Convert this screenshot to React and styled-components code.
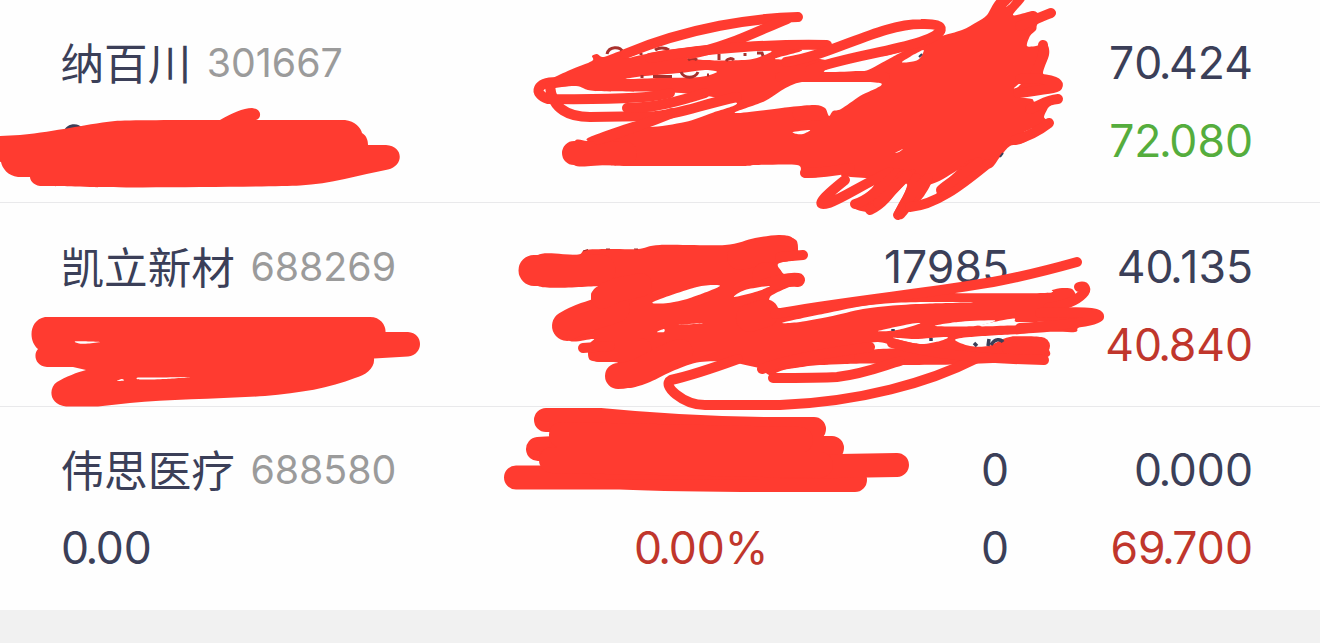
import React from 'react';
import styled, { createGlobalStyle } from 'styled-components';

const GlobalStyle = createGlobalStyle`
  body { margin: 0; background: #f1f1f1; }
`;

const colors = { ink: '#3b3f58', green: '#55ad3d', red: '#c0362c', marker: '#ff3b30' };

const Page = styled.main`
  position: relative;
  width: 1320px;
  height: 643px;
  overflow: hidden;
  background: #f1f1f1;
  font-family: Inter, 'Noto Sans CJK SC', sans-serif;
  font-size: 44.5px;
  color: ${colors.ink};
`;

const Row = styled.section`
  box-sizing: border-box;
  height: ${(p) => p.$height}px;
  padding: ${(p) => p.$top}px 67px 0 61px;
  background: #fefefe;
  border-bottom: ${(p) => (p.$last ? '0' : '1px solid #e9e9eb')};
`;

const Line = styled.div`
  display: grid;
  grid-template-columns: 400px 307.5px 240.5px 1fr;
  height: 78px;
  line-height: 78px;
  white-space: nowrap;
`;

const Cell = styled.div`
  text-align: ${(p) => (p.$left ? 'left' : 'right')};
  color: ${(p) => colors[p.$tone || 'ink']};
`;

const Tight = styled.span`
  letter-spacing: -2.5px;
`;

const Holding = styled.div`
  display: flex;
  gap: 15.5px;
`;

const Name = styled.span`
  margin-left: -0.5px;
  line-height: 74px;
  font-family: 'Noto Sans CJK SC', sans-serif;
  font-size: 43.6px;
`;

const Code = styled.span`
  font-size: 39.3px;
  color: #9b9b9b;
`;

const Ink = styled.svg`
  position: absolute;
  inset: 0;
  pointer-events: none;
`;

// A decimal number; the point and the digit before it are set tightly.
function Decimal({ value }) {
  const at = value.indexOf('.');
  return (
    <>
      {value.slice(0, at - 1)}
      <Tight>{value.slice(at - 1, at + 1)}</Tight>
      {value.slice(at + 1)}
    </>
  );
}

// Closed smooth curve through a list of "x,y" points.
function smooth(text) {
  const p = text.trim().split(/\s+/).map((s) => s.split(',').map(Number));
  const n = p.length;
  let d = `M${p[0][0]},${p[0][1]}`;
  for (let i = 0; i < n; i++) {
    const a = p[(i + n - 1) % n], b = p[i], c = p[(i + 1) % n], e = p[(i + 2) % n];
    const k = 7;
    d += `C${b[0] + (c[0] - a[0]) / k},${b[1] + (c[1] - a[1]) / k} ${c[0] - (e[0] - b[0]) / k},${c[1] - (e[1] - b[1]) / k} ${c[0]},${c[1]}`;
  }
  return d + 'Z';
}

const masses = [
  '552,79 570,70 592,61 592,56 597,54 604,57 625,50 660,50 700,46 760,46 802,50 775,59 820,59 860,67 895,50 938,37 962,30 977,22 987,15 999,-2 1025,-2 1013,15 1032,11 1037,12.5 1042,18 1037,25 1036,30 1030,36 1027,46 1036,46 1042,44 1048,46 1049,55 1043,73 1050,78 1052,88 1040,94 1020,97 1032,99 1035,102 1048,100 1052,104 1048,108 1044,117 1047,121 1043,130 1023,143 1010,146 1000,157 991,168 978,166 962,168 937,182 912,188 895,172 872,178 843,176 839,174 807,178 801,173 797,165 755,165 740,166 630,166 605,165 574,165 575,141 587,141 590,137 637,121 650,127 685,122 712,113 737,103 700,95 660,92 595,91 576,86 548,88',
  '538,255 577,255 585,250 608,249 638,249 660,245 725,245 755,238 780,235 796,240 798,250 803,258 795,260 778,264 784,274 798,278 795,284 770,297 779,308 840,302 920,290 950,293 1045,293 1052,290 1062,288 1072,289 1076,298 1065,308 1085,309 1095,315 1090,321 1078,328 1075,332 1047,332 1003,336 1040,337 1046,345 1045,358 970,364 890,365 820,365 775,370 730,362 700,362 675,370 650,382 630,388 614,385 606,376 618,363 600,362 590,360 588,353 590,348 592,343 593,339 570,341 560,325 575,308 590,303 592,292 605,286 538,286',
  '854,207 870,212 882,206 903,186 915,170 885,172 872,188',
  '894,214 902,219 912,208 924,196 932,178 912,176 905,192',
  '938,190 945,195 985,168 970,160',
];

// Heavy marker passes: [width, path].
const heavy = [
  [24, 'M574,153L625,153.5'],
  [15, 'M800,114L819,113'],
  [31, 'M534,270.5L600,270'],
  [26, 'M740,257C755,254 770,248 785,248.5'],
  [28, 'M766,276L769,278'],
  [14, 'M765,286C780,281 790,279 798,280'],
  [30, 'M567,326C580,318 595,314 615,308'],
  [24, 'M603,297C615,288 625,289 640,285'],
  [28, 'M765,313L750,318'],
  [24, 'M600,350L640,350'],
  [26, 'M618,376C640,376 655,360 680,352'],
  [18, 'M1010,346L1041,346'],
  [24, 'M546,420L600,420C650,425 720,430 814,429'],
  [24, 'M538,449C600,444 780,448 832,448'],
  [24, 'M516,477.5L620,477.5C700,481 780,480 855,480'],
  [24, 'M600,468L780,467L897,465'],
  [26, 'M562,435L800,440M552,460L820,465'],
];

const gaps = [
  '628,58 640,53 660,44 695,34 731,30 715,38 697,46 660,51',
  '687,58 703,55 722,52.5 770,50.5 762,56 750,59.5 725,60.5 703,60',
  '626,79 645,76 680,73 705,70 717,72 700,77 660,78',
  '825,72 833,67 870,59 897,53 907,49 887,60 868,70 858,71',
  '802,82 880,83 860,96 841,109 833,111 829,116 825,108 815,105 790,107 735,113 765,101',
  '793,132 810,130 803,134 797,134',
  '902,62 923,50 920,58 915,61',
  '1014,88 1024,80 1018,87',
  '1024,132 1033,128 1028,131',
  '1006,7 1013,0 1010,4',
  '895,153 903,149 899,152',
  '653,302 697,287 720,286 690,298 668,303',
  '734,297 745,290 770,286 755,292',
  '657,332 664,329 664,332',
  '677,325 703,323 695,324',
  '783,322.5 830,312.5 863,306 893,303 930,302 975,302.5 930,303.5 893,305.5 863,309 830,316.5 800,322',
  '878,331 910,324 920,323.5 897,330',
  '935,326 958,322 995,320.5 975,326',
  '978,326 1013,318.5 1018,322 1065,321 1082,318.5 1040,324 1010,325.5',
  '893,338 915,339 947,337 940,341 920,344',
  '955,340 970,337 1015,334.5 1003,339 988,346 970,346',
  '840,352 862,345 878,342 895,346 902,348 880,349',
  '943,353 955,352 968,355 955,356',
  '783,372 805,367 845,364 877,364 837,371',
  '75,341.5 88,341.5 100,342 88,343.5 79,343.5',
  '117,381 122,379 124,380.5',
  '138,377.5 160,377.5 190,377 165,379 140,379.5',
];

const strokes = [
  'M798,17C755,18 690,27 625,54',
  'M787,19C755,32 725,48 690,54',
  'M827,45C780,44 710,47 650,58',
  'M786,62C830,56 880,24 921,24C950,23 945,34 920,42C885,53 845,57 810,70',
  'M780,77L885,77',
  'M560,82C535,81 533,94 548,99C590,99.5 650,99 670,93',
  'M550,86C552,110 570,117 590,117L655,116C680,114 700,105 737,97',
  'M598,140C625,131 650,122 672,113',
  'M627,108C655,108 680,101 705,93',
  'M845,180C820,200 815,207 829,203C845,197 865,183 890,172',
  'M855,204C870,200 885,183 897,173',
  'M870,210C885,203 892,190 902,176',
  'M878,203C890,195 895,186 908,175',
  'M898,215C905,205 910,195 916,178',
  'M908,200C912,192 920,185 928,178',
  'M910,207C935,205 960,186 987,164',
  'M941,190C950,182 965,174 978,162',
  'M1051,13C1040,17 1030,22 1020,26',
  'M1043,45C1045,55 1040,62 1035,75',
  'M1020,79C1055,76 1065,86 1053,88C1040,90 1030,92 1018,93',
  'M1058,99C1045,100 1040,106 1030,109',
  'M1049,123C1040,130 1030,136 1015,140',
  'M805,173C820,173 835,171 850,168',
  'M803,255L780,257',
  'M583,348L610,346',
  'M1077,262C1045,271 1020,277 993,282C930,293 840,302 775,314',
  'M1079,287C1092,284 1086,302 1048,308',
  'M1040,313C1075,312 1100,311 1099,317C1096,322 1060,325 1020,328',
  'M770,370C790,360 820,358 850,357',
  'M773,378C800,378 820,378 837,377C865,374 885,365 900,361',
  'M762,369C790,358 840,351 870,347',
  'M738,359C705,371 680,378 671,380C661,385 683,405 705,405L780,405C860,402 930,382 975,359',
  'M892,343C930,354 970,358 1044,360',
];

const darkBits = [
  'M607,54C609,46 620,46 623,52',
  'M641,53L641,55M642,75L642,78',
  'M655,50C658,47.5 665,47 669,50',
  'M653,76.5L672,76.5',
  'M688,60C691,58 695,58 697,60M681,72C684,79 695,79 698,72',
  'M707,75L709,75M719,54L719,60M726,61C728,58 732,58 734,60M745,53L745,56M757,53L762,53L763,56',
];

export default function App() {
  return (
    <Page>
      <GlobalStyle />
      <Row $height={203} $top={24}>
        <Line>
          <Holding><Name>纳百川</Name><Code>301667</Code></Holding>
          <Cell /><Cell /><Cell><Decimal value="70.424" /></Cell>
        </Line>
        <Line><Cell /><Cell /><Cell /><Cell $tone="green"><Decimal value="72.080" /></Cell></Line>
      </Row>
      <Row $height={204} $top={25}>
        <Line>
          <Holding><Name>凯立新材</Name><Code>688269</Code></Holding>
          <Cell /><Cell>17985</Cell><Cell><Decimal value="40.135" /></Cell>
        </Line>
        <Line><Cell /><Cell /><Cell /><Cell $tone="red"><Decimal value="40.840" /></Cell></Line>
      </Row>
      <Row $height={203} $top={24} $last>
        <Line>
          <Holding><Name>伟思医疗</Name><Code>688580</Code></Holding>
          <Cell /><Cell>0</Cell><Cell><Decimal value="0.000" /></Cell>
        </Line>
        <Line>
          <Cell $left><Decimal value="0.00" /></Cell>
          <Cell $tone="red"><Decimal value="0.00%" /></Cell>
          <Cell>0</Cell>
          <Cell $tone="red"><Decimal value="69.700" /></Cell>
        </Line>
      </Row>
      <Ink width="1320" height="643" viewBox="0 0 1320 643">
        <path d="M64,132C65,123 79,122 82,128Z" fill={colors.ink} />
        <g fill={colors.marker}>
          <path d="M-2,136L20,135C60,131 80,125 115,121C125,120 180,120 220,120C232,113 243,108 252,108C262,109 262,118 256,120L345,120C355,121 361,128 362,133C367,136 368,141 368,145L386,145C404,146 404,166 388,169.5C360,175 330,184 300,185.5C270,187 130,188 90,187C60,186 50,186 40,186C33,185 30,180 30,177L18,177C8,176 2,168 1,162L-2,161Z" />
          <path d="M45,317L370,317C381,317 386,326 385.5,332L408,332C424,333 424,355 408,356.5L374,358.5C375,368 366,375 355,378C330,388 300,393 265,396C220,399 170,399 130,403L98,406.5L66,406.5C49,405 48,388 57,382C65,377 78,372 86,370L73,367L47,367C35,366 33,354 38,349C28,341 29,320 45,317Z" />
          {masses.map((m) => <path key={m} d={smooth(m)} />)}
        </g>
        <g fill="none" stroke={colors.marker} strokeLinecap="round" strokeLinejoin="round">
          {heavy.map(([w, d]) => <path key={d} d={d} strokeWidth={w} />)}
        </g>
        <g fill="#fefefe">{gaps.map((g) => <path key={g} d={smooth(g)} />)}</g>
        <g fill="none" stroke="#a8302c" strokeWidth="3">{darkBits.map((d) => <path key={d} d={d} />)}</g>
        <g fill="none" stroke={colors.ink} strokeWidth="3.5">
          <path d="M893,329L893,331M893,344L893,347M931,338L931,341M974,343L977,346M988,346L989,339M991,345C995,338 1001,339 1003,342" />
          <path d="M919,57L922,54M1000,157L1003,153" strokeWidth="2" />
        </g>
        <g fill="none" stroke={colors.marker} strokeWidth="10" strokeLinecap="round" strokeLinejoin="round">
          {strokes.map((s) => <path key={s} d={s} />)}
        </g>
        <path d="M583,251L588,249.5M606,249L610,249M634,249L638,249" stroke="#a52f2c" strokeWidth="1" />
      </Ink>
    </Page>
  );
}
